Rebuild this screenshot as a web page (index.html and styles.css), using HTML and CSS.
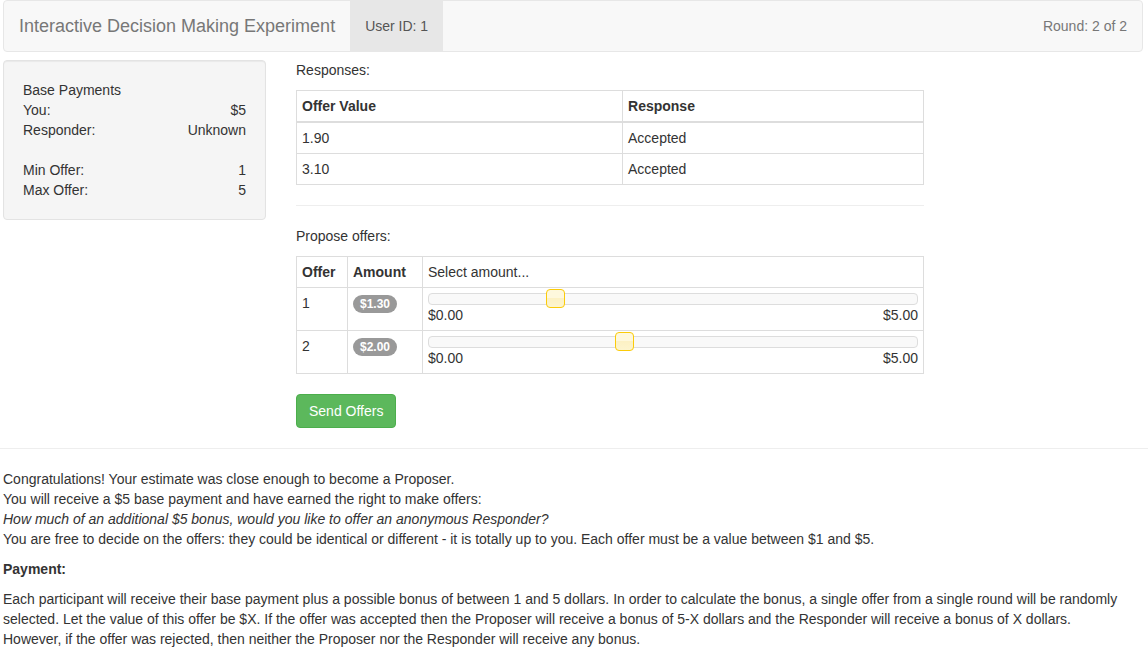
FILE: index.html
```html
<!DOCTYPE html>
<html lang="en">
<head>
<meta charset="utf-8">
<title>Interactive Decision Making Experiment</title>
<link rel="stylesheet" href="styles.css">
</head>
<body>
<div class="container">
  <nav class="navbar">
    <a class="navbar-brand" href="#">Interactive Decision Making Experiment</a>
    <a class="navbar-link active" href="#">User ID: 1</a>
    <span class="navbar-text">Round: 2 of 2</span>
  </nav>
  <div class="columns">
    <aside class="well">
      <div>Base Payments</div>
      <div class="pair"><span>You:</span><span>$5</span></div>
      <div class="pair"><span>Responder:</span><span>Unknown</span></div>
      <br>
      <div class="pair"><span>Min Offer:</span><span>1</span></div>
      <div class="pair"><span>Max Offer:</span><span>5</span></div>
    </aside>
    <main>
      <p>Responses:</p>
      <table class="table responses">
        <thead>
          <tr><th class="col-value">Offer Value</th><th>Response</th></tr>
        </thead>
        <tbody>
          <tr><td>1.90</td><td>Accepted</td></tr>
          <tr><td>3.10</td><td>Accepted</td></tr>
        </tbody>
      </table>
      <hr>
      <p>Propose offers:</p>
      <table class="table offers">
        <tbody>
          <tr><th class="col-offer">Offer</th><th class="col-amount">Amount</th><td>Select amount...</td></tr>
          <tr>
            <td>1</td>
            <td><span class="badge">$1.30</span></td>
            <td>
              <div class="slider"><input type="range" min="0" max="5" step="0.1" value="1.3" aria-label="Amount for offer 1"></div>
              <div class="pair"><span>$0.00</span><span>$5.00</span></div>
            </td>
          </tr>
          <tr>
            <td>2</td>
            <td><span class="badge">$2.00</span></td>
            <td>
              <div class="slider"><input type="range" min="0" max="5" step="0.1" value="2" aria-label="Amount for offer 2"></div>
              <div class="pair"><span>$0.00</span><span>$5.00</span></div>
            </td>
          </tr>
        </tbody>
      </table>
      <button class="btn" type="button">Send Offers</button>
    </main>
  </div>
</div>
<hr>
<section class="container">
  <p>Congratulations! Your estimate was close enough to become a Proposer.<br>
  You will receive a $5 base payment and have earned the right to make offers:<br>
  <em>How much of an additional $5 bonus, would you like to offer an anonymous Responder?</em><br>
  You are free to decide on the offers: they could be identical or different - it is totally up to you. Each offer must be a value between $1 and $5.</p>
  <p><strong>Payment:</strong></p>
  <p>Each participant will receive their base payment plus a possible bonus of between 1 and 5 dollars. In order to calculate the bonus, a single offer from a single round will be randomly<br>
  selected. Let the value of this offer be $X. If the offer was accepted then the Proposer will receive a bonus of 5-X dollars and the Responder will receive a bonus of X dollars.<br>
  However, if the offer was rejected, then neither the Proposer nor the Responder will receive any bonus.</p>
</section>
</body>
</html>
```

FILE: styles.css
```css
*, *::before, *::after { box-sizing: border-box; }

body {
  margin: 0;
  background: #fff;
  color: #333;
  font: 14px/20px "Liberation Sans", Arial, sans-serif;
}

p { margin: 0 0 10px; }

hr {
  margin: 20px 0;
  border: 0;
  border-top: 1px solid #eee;
}

.container { padding: 0 5px 0 3px; }

.navbar {
  display: flex;
  margin-bottom: 8px;
  border: 1px solid #e7e7e7;
  border-radius: 4px;
  background: #f8f8f8;
  color: #777;
}

.navbar a { color: inherit; text-decoration: none; }
.navbar-brand { padding: 15px; font-size: 18px; }
.navbar-link, .navbar-text { padding: 15px; }
.navbar .active { background: #e7e7e7; color: #555; }
.navbar-text { margin-left: auto; }

.columns {
  display: grid;
  grid-template-columns: 263fr 628fr 189fr;
  gap: 30px;
  align-items: start;
}

.well {
  padding: 19px;
  border: 1px solid #e3e3e3;
  border-radius: 4px;
  background: #f5f5f5;
  box-shadow: inset 0 1px 1px rgba(0, 0, 0, 0.05);
}

.pair { display: flex; justify-content: space-between; }

.table {
  width: 100%;
  margin-bottom: 20px;
  border-collapse: collapse;
  table-layout: fixed;
}

.table th, .table td {
  padding: 5px;
  border: 1px solid #ddd;
  text-align: left;
  vertical-align: top;
}

.table thead th { border-bottom-width: 2px; }
.col-value { width: 52%; }
.col-offer { width: 51px; }
.col-amount { width: 75px; }

.badge {
  display: inline-block;
  padding: 3px 7px;
  border-radius: 10px;
  background: #999;
  color: #fff;
  font-size: 12px;
  font-weight: bold;
  line-height: 12px;
}

.slider {
  position: relative;
  height: 12px;
  border: 1px solid #ddd;
  border-radius: 4px;
  background: #f9f9f9;
}

/* The handle is centred on the end of the track at either limit. */
.slider input {
  position: absolute;
  top: -5px;
  left: -10px;
  width: calc(100% + 20px);
  height: 19px;
  margin: 0;
  background: transparent;
  appearance: none;
}

.slider input::-webkit-slider-thumb {
  width: 19px;
  height: 19px;
  border: 1px solid #fbcb09;
  border-radius: 4px;
  background: linear-gradient(#fef8dd, #fef8dd 50%, #fcf1c4 50%, #fdf5ce);
  appearance: none;
}

.btn {
  display: block;
  padding: 6px 12px;
  border: 1px solid #4cae4c;
  border-radius: 4px;
  background: #5cb85c;
  color: #fff;
  font: inherit;
}
```
